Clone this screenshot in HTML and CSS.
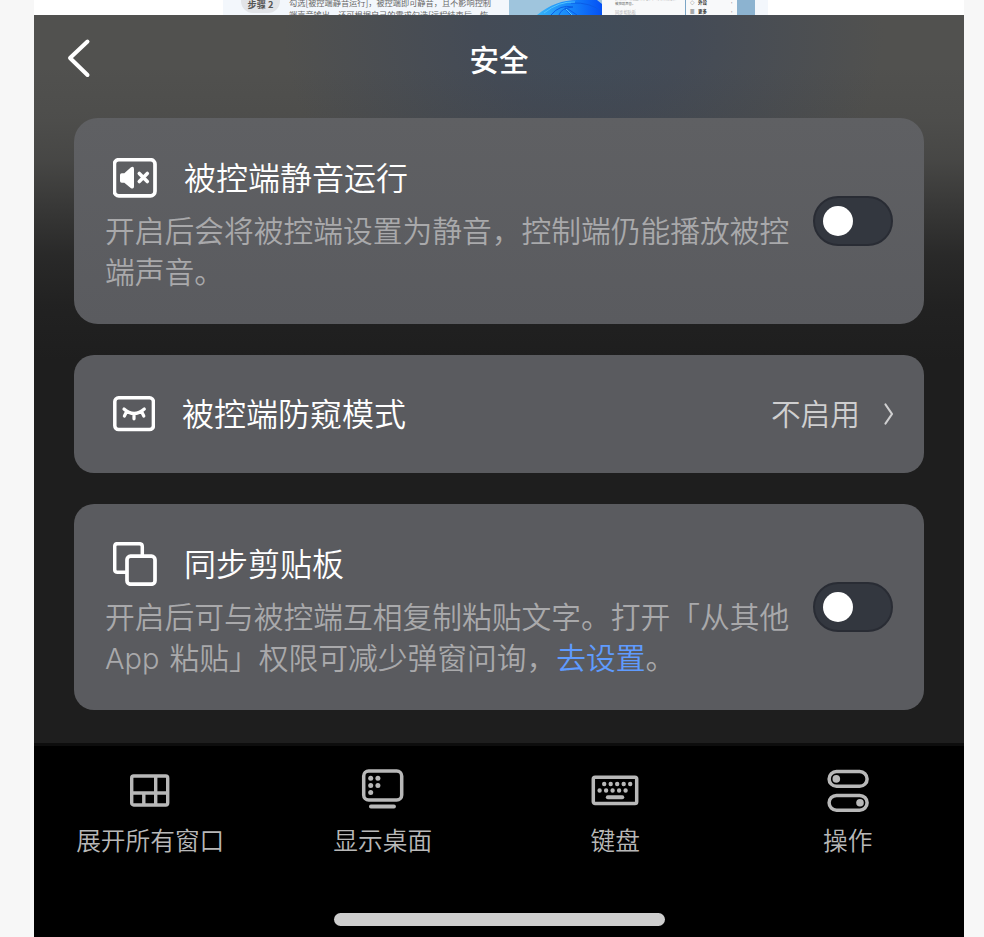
FILE: index.html
```html
<!DOCTYPE html>
<html lang="zh-CN">
<head>
<meta charset="utf-8">
<title>安全</title>
<link rel="stylesheet" href="styles.css">
</head>
<body>
<div class="screen">
  <div class="page-strip">
    <div class="doc">
      <span class="step">步骤 2</span>
      <p class="doc-text">勾选[被控端静音运行]，被控端即可静音，且不影响控制<br>端声音输出，还可根据自己的需求勾选[远程结束后，恢</p>
      <div class="shot">
        <svg class="wallpaper" width="93" height="15" viewBox="0 0 93 15">
          <defs><linearGradient id="bloom"><stop offset="0" stop-color="#38b4f8"/><stop offset=".5" stop-color="#1788fa"/><stop offset="1" stop-color="#0450f5"/></linearGradient></defs>
          <rect width="93" height="15" fill="#9fc5dd"/>
          <path d="M28 15C40 5 54 0 68 0H88L93 4V15Z" fill="url(#bloom)"/>
          <path d="M42 15Q51 4 64 7Q52 8 50 15M62 15Q52 5 59 9L68 15M62 3Q82 2 93 12" fill="none" stroke="#0a5ce6" stroke-width="1"/>
          <path d="M35 13Q50 1 66 2M57 9L63 15" fill="none" stroke="#51c5ff" stroke-width="1"/>
        </svg>
        <div class="shot-copy"><span>会将被控端设置为静音，控制端仍能播放</span><span>被控端声音。</span><span class="faint">同步剪贴板</span></div>
        <div class="shot-menu"><div><i>◇</i><b>外设</b><em>›</em></div><div><i>▦</i><b>更多</b><em>›</em></div></div>
        <div class="shot-side"></div>
      </div>
    </div>
  </div>
  <main class="panel">
    <header class="header">
      <svg class="back" width="26" height="42" viewBox="0 0 26 42"><path d="M21.5 4.5L4 21L21.5 38" fill="none" stroke="#fff" stroke-width="4" stroke-linecap="round" stroke-linejoin="round"/></svg>
      <h1>安全</h1>
    </header>
    <section class="cards">
      <article class="card card-tall">
        <div class="card-body">
          <div class="card-title">
            <svg width="44" height="40" viewBox="0 0 44 40"><rect x="1.4" y="1.7" width="40.6" height="36.1" rx="4.5" fill="none" stroke="#fff" stroke-width="3.7"/><path d="M7 17Q7 15.2 8.8 15.2H11.3L18 9.2Q21 8 21 11V28.5Q21 31.5 18 30.2L11.3 24.7H8.8Q7 24.7 7 23Z" fill="#fff"/><path d="M26.3 15.5L34.3 23.5M34.3 15.5L26.3 23.5" stroke="#fff" stroke-width="3.6" stroke-linecap="round"/></svg>
            <h2>被控端静音运行</h2>
          </div>
          <p class="desc">开启后会将被控端设置为静音，控制端仍能播放被控<br>端声音。</p>
        </div>
        <span class="toggle"><span class="knob"></span></span>
      </article>
      <article class="card card-row">
        <div class="card-title">
          <svg width="42" height="36" viewBox="0 0 42 36"><rect x="1.8" y="1.8" width="38.6" height="31.8" rx="3.8" fill="none" stroke="#fff" stroke-width="3.5"/><path d="M11 13Q21 22 31.3 13M13.4 16L11.4 20M21 18V22.8M28.8 16L30.8 20" fill="none" stroke="#fff" stroke-width="3.2" stroke-linecap="round"/></svg>
          <h2>被控端防窥模式</h2>
        </div>
        <div class="value"><span>不启用</span><svg width="12" height="24" viewBox="0 0 12 24"><path d="M2.5 2.5L9 12L2.5 21.5" fill="none" stroke="#cfcfd0" stroke-width="2.2" stroke-linecap="round" stroke-linejoin="round"/></svg></div>
      </article>
      <article class="card card-tall">
        <div class="card-body">
          <div class="card-title">
            <svg width="44" height="44" viewBox="0 0 44 44"><path d="M13 30.2H4.6Q1.7 30.2 1.7 27.3V4.6Q1.7 1.7 4.6 1.7H26.3Q29.3 1.7 29.3 4.6V13" fill="none" stroke="#fff" stroke-width="3.5"/><rect x="14" y="14.2" width="28" height="28" rx="3.5" fill="none" stroke="#fff" stroke-width="3.7"/></svg>
            <h2>同步剪贴板</h2>
          </div>
          <p class="desc">开启后可与被控端互相复制粘贴文字。打开「从其他<br><span class="latin">App</span> 粘贴」权限可减少弹窗问询，<a>去设置</a>。</p>
        </div>
        <span class="toggle"><span class="knob"></span></span>
      </article>
    </section>
    <footer class="dock">
      <nav class="tabs">
        <div class="tab">
          <svg width="48" height="48" viewBox="0 0 48 48" fill="none" stroke="#b8b8b8" stroke-width="3.4"><rect x="5.7" y="9" width="36" height="29" rx="2"/><path d="M5.7 26H41.7M29.7 9V38M17.8 26V38"/></svg>
          <span>展开所有窗口</span>
        </div>
        <div class="tab">
          <svg width="48" height="48" viewBox="0 0 48 48" fill="none" stroke="#b8b8b8" stroke-width="3.5"><rect x="4.7" y="4" width="38" height="29" rx="5"/><path d="M11.9 39.5H35" stroke-width="3.8" stroke-linecap="round"/><g fill="#b8b8b8" stroke="none"><circle cx="11.7" cy="11.2" r="2.5"/><circle cx="18.9" cy="11.2" r="2.5"/><circle cx="11.7" cy="18.4" r="2.5"/><circle cx="18.9" cy="18.4" r="2.5"/><circle cx="11.7" cy="25.5" r="2.5"/></g></svg>
          <span>显示桌面</span>
        </div>
        <div class="tab">
          <svg width="48" height="48" viewBox="0 0 48 48" fill="none" stroke="#b8b8b8" stroke-width="3.5"><rect x="2.3" y="10.2" width="43.4" height="26.4" rx="1.8"/><path d="M13.2 17H40M8.6 23.5H36" stroke-width="4.4" stroke-linecap="round" stroke-dasharray="0 6.5"/><path d="M16.8 30.2H31.3" stroke-width="3.9" stroke-linecap="round"/></svg>
          <span>键盘</span>
        </div>
        <div class="tab">
          <svg width="48" height="48" viewBox="0 0 48 48" fill="none" stroke="#b8b8b8" stroke-width="3.5"><rect x="5.1" y="4.5" width="38" height="14.8" rx="7.4"/><rect x="5.1" y="28.4" width="38" height="14.8" rx="7.4"/><circle cx="12.3" cy="11.9" r="3.8" fill="#b8b8b8" stroke="none"/><circle cx="36" cy="35.8" r="3.8" fill="#b8b8b8" stroke="none"/></svg>
          <span>操作</span>
        </div>
      </nav>
      <div class="home-bar"></div>
    </footer>
  </main>
</div>
</body>
</html>
```
FILE: styles.css
```css
* { box-sizing: border-box; }
body {
  margin: 0;
  background: #f7f7f7;
  font-family: "Noto Sans CJK SC", sans-serif;
  font-weight: 350;
}
h1, h2, p { margin: 0; }
svg { display: block; flex: none; }
.screen {
  width: 930px;
  height: 937px;
  margin-left: 34px;
  display: flex;
  flex-direction: column;
  overflow: hidden;
}

/* Sliver of the page behind the sheet */
.page-strip {
  height: 15px;
  flex: none;
  overflow: hidden;
  background: #fff;
  padding-left: 189px;
}
.doc {
  width: 545px;
  height: 15px;
  background: #f3f7fc;
  display: flex;
  align-items: flex-start;
  padding-left: 18px;
}
.step {
  width: 39px;
  height: 24px;
  margin-top: -11px;
  border-radius: 12px;
  background: #e2e4e8;
  color: #555;
  font-size: 9.2px;
  font-weight: 700;
  line-height: 31px;
  text-align: center;
  white-space: nowrap;
}
.doc-text {
  width: 220px;
  margin: -4px 0 0 9px;
  font-size: 8.2px;
  font-weight: 400;
  line-height: 12px;
  color: #666;
  white-space: nowrap;
}
.shot {
  width: 246px;
  height: 15px;
  display: flex;
  overflow: hidden;
}
.shot-copy {
  width: 83px;
  height: 19px;
  flex: none;
  padding-left: 13px;
  margin-top: -4px;
  background: #f8f9fa;
  display: flex;
  flex-direction: column;
  font-size: 3.4px;
  line-height: 5px;
  color: #555;
  white-space: nowrap;
}
.shot-copy .faint { color: #aaa; font-size: 4.2px; margin-top: 4px; }
.shot-menu {
  width: 52px;
  flex: none;
  margin-top: -2px;
  border-left: 1px solid #7ba6c6;
  background: #f8f9fa;
  font-size: 4.5px;
  line-height: 9px;
  color: #333;
}
.shot-menu div { display: flex; padding-left: 4px; }
.shot-menu i { width: 8px; font-style: normal; }
.shot-menu b { width: 33px; }
.shot-menu em { font-style: normal; }
.shot-side { width: 18px; flex: none; background: #8cb3d0; }

/* Sheet */
.panel {
  flex: 1;
  display: flex;
  flex-direction: column;
  background:
    linear-gradient(to bottom, rgba(30,30,30,0) 50px, rgba(30,30,30,.07) 103px, rgba(30,30,30,.2) 145px, rgba(30,30,30,.48) 190px, rgba(30,30,30,.78) 240px, rgba(30,30,30,.93) 290px, #1e1e1e 345px),
    radial-gradient(ellipse 300px 230px at 550px 20px, #404c59 0%, #444b56 35%, rgba(80,80,79,0) 100%),
    #51514f;
}
.header {
  height: 103px;
  display: grid;
  grid-template-columns: 1fr auto 1fr;
  align-items: start;
  padding: 22px 32px 0 32px;
}
h1 {
  margin-top: -1px;
  font-size: 29.5px;
  line-height: 45px;
  font-weight: 500;
  color: #fff;
}
.cards {
  display: flex;
  flex-direction: column;
  gap: 31px;
  padding: 0 40px;
  height: 625px;
}
.card {
  background: #5a5b5f;
  border-radius: 20px;
  display: flex;
  justify-content: space-between;
  align-items: center;
  padding: 0 31px;
}
.card:first-child {
  background: linear-gradient(#5f6063, #5a5b5f);
  border-radius: 24px;
}
.card-tall { height: 206px; flex: none; }
.card-row { height: 118px; flex: none; padding-right: 29px; }
.card-body { align-self: flex-start; padding-top: 36px; }
.card-title {
  height: 48px;
  display: flex;
  align-items: center;
  padding-left: 8px;
  gap: 27px;
}
h2 {
  margin-top: -5px;
  font-size: 32px;
  line-height: 48px;
  font-weight: 350;
  color: #fff;
  white-space: nowrap;
}
.desc {
  margin-top: 7px;
  font-size: 29.75px;
  line-height: 41px;
  color: #a9a9ab;
  white-space: nowrap;
  word-spacing: 3.5px;
}
.latin { font-family: Inter, sans-serif; font-size: 29px; font-weight: 300; }
.desc a { color: #5f9bff; }
.toggle {
  width: 80px;
  height: 50px;
  border-radius: 25px;
  border: 2px solid #292c34;
  background: #33373f;
  display: flex;
  align-items: center;
  padding-left: 8px;
  flex: none;
}
.card .toggle { margin-bottom: 1px; }
.knob {
  width: 30px;
  height: 30px;
  border-radius: 50%;
  background: #fff;
}
.value {
  display: flex;
  align-items: center;
  gap: 23px;
  font-size: 29.7px;
  line-height: 44px;
  color: #cfcfd0;
}
.value span { margin-top: -3px; }

/* Bottom dock */
.dock {
  flex: 1;
  background: #000;
  border-top: 3px solid #0d0d0d;
  display: flex;
  flex-direction: column;
  justify-content: space-between;
  align-items: center;
  padding: 21px 0 11px;
}
.tabs {
  width: 930px;
  display: grid;
  grid-template-columns: repeat(4, 1fr);
}
.tab {
  display: flex;
  flex-direction: column;
  align-items: center;
  color: #b8b8b8;
  font-size: 24.7px;
  line-height: 36px;
}
.tab span { margin-top: 6px; }
.home-bar {
  width: 331px;
  height: 13px;
  border-radius: 7px;
  background: #cecece;
}
```
